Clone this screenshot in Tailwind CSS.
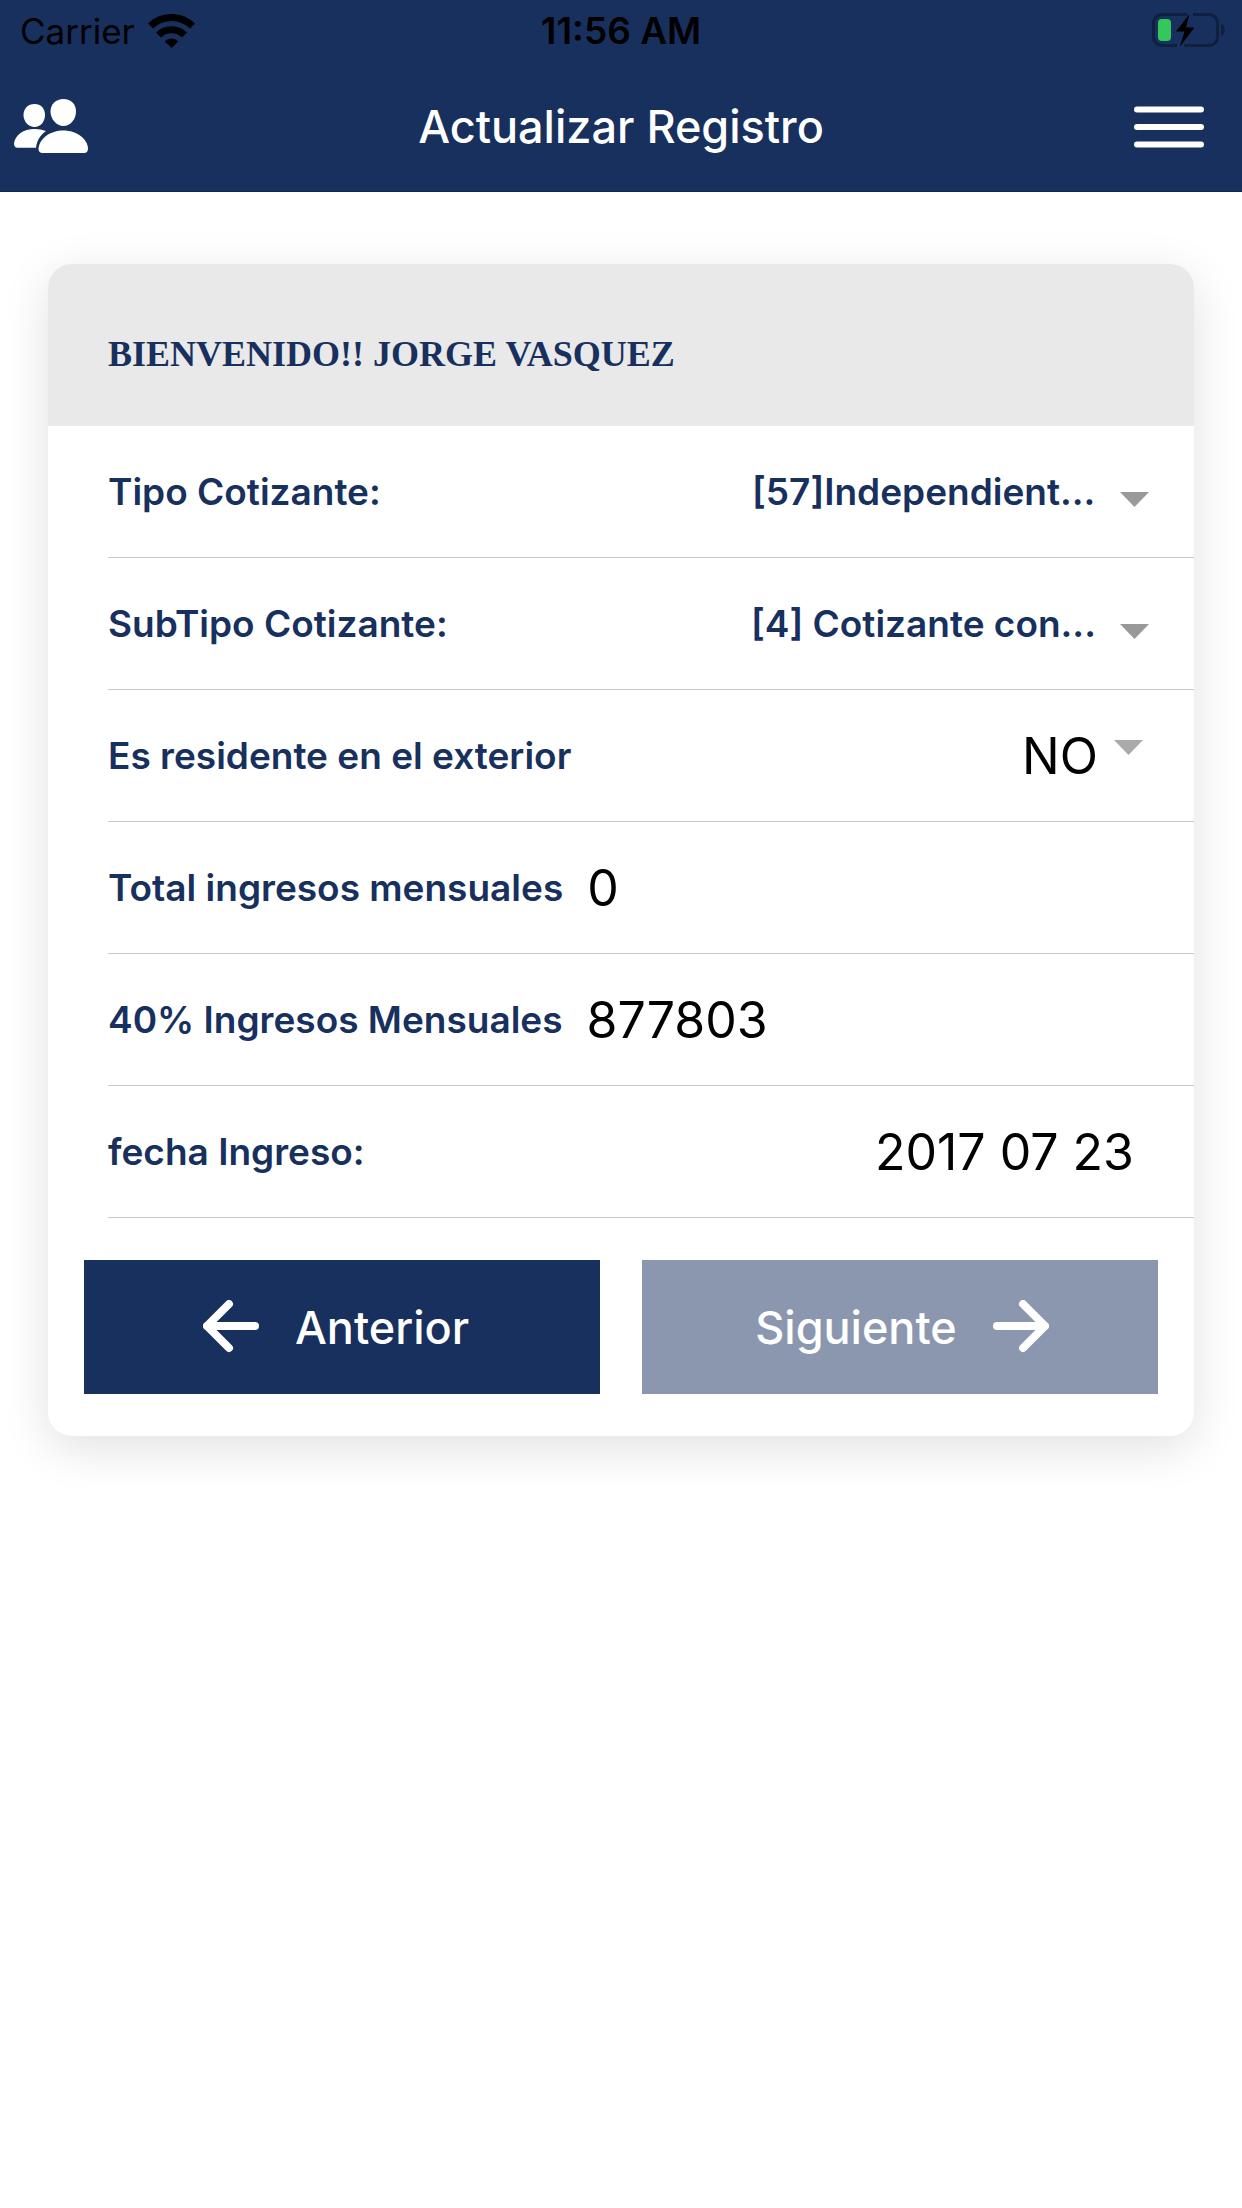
<!DOCTYPE html>
<html lang="es">
<head>
    <meta charset="UTF-8">
    <meta name="viewport" content="width=device-width, initial-scale=1.0">
    <title>Actualizar Registro</title>
    <script src="https://cdn.jsdelivr.net/npm/@tailwindcss/browser@4"></script>
</head>
<body class="bg-white font-['Inter','Liberation_Sans',sans-serif] text-black">

    <header class="bg-[#17305e] border-b border-[#132645]">
        <!-- Status bar -->
        <div class="grid grid-cols-[1fr_auto_1fr] items-center h-15 px-4 pt-px">
            <div class="flex items-center gap-[13px] pl-1">
                <span class="text-[35px] leading-10">Carrier</span>
                <svg class="w-[47px] h-[34px]" viewBox="0 0 47 34" fill="none" stroke="#000">
                    <path d="M2.500 12a30 30 0 0 1 42 0" stroke-width="7" />
                    <path d="M10.500 21a18.500 18.500 0 0 1 26 0" stroke-width="7" />
                    <path d="M23.500 34l-6.800-6.800a9.800 9.800 0 0 1 13.600 0z" fill="#000" stroke="none" />
                </svg>
            </div>
            <span class="text-[37px] leading-10 font-semibold">11:56 AM</span>
            <svg class="justify-self-end w-[74px] h-[35px]" viewBox="0 0 74 35" fill="none">
                <path d="M35 1.500H10A8.500 8.500 0 0 0 1.500 10v14a8.500 8.500 0 0 0 8.500 8.500h15M41 1.500h16a8.500 8.500 0 0 1 8.500 8.500v14a8.500 8.500 0 0 1-8.500 8.500H32" stroke="#0f1f3d" stroke-width="3" />
                <path d="M69 11c5 1 5 11 0 12z" fill="#0f1f3d" />
                <rect x="6" y="6" width="13" height="22" rx="4" fill="#34c759" />
                <path d="M37.500 1L24 18.500h8.500L28 33.500l14.500-19H34z" fill="#000" />
            </svg>
        </div>
        <!-- Toolbar -->
        <div class="grid grid-cols-[1fr_auto_1fr] items-center h-[131px] px-[14px] pt-0.5 text-white">
            <button type="button" aria-label="Usuarios" class="justify-self-start">
                <svg class="block w-[75px] h-[55px]" viewBox="0 0 75 55" fill="#fff">
                    <path d="M20.500 5C27 5 31 9.500 31 16s-4.500 12-10.500 12S9.500 22.500 9.500 16 14 5 20.500 5z" />
                    <path d="M49.500 0C57 0 62 5 62 12.500S56.500 27 49.500 27 36.500 20 36.500 12.500 42 0 49.500 0z" />
                    <path d="M20.500 30c4.500 0 8 .8 11.500 2-5.500 4-9 9-10 16.700H3.500C1 48.700 0 47 0 44.500 1 36 9.500 30 20.500 30z" />
                    <path d="M49.500 31.500C63 31.500 73.500 40 74 49.500c0 3-1.500 4.500-4 4.500H28.500c-2.500 0-4-1.500-4-4.500C25.500 39.500 36 31.500 49.500 31.500z" />
                </svg>
            </button>
            <h1 class="text-[45px] leading-13 font-medium">Actualizar Registro</h1>
            <button type="button" aria-label="Menú" class="justify-self-end pr-6">
                <svg class="block w-[70px] h-[42px]" viewBox="0 0 70 42" stroke="#fff" stroke-width="6" stroke-linecap="round">
                    <path d="M3 3.500h64M3 21h64M3 38.500h64" />
                </svg>
            </button>
        </div>
    </header>

    <main class="px-12 py-18">
        <form class="rounded-3xl overflow-hidden bg-white shadow-[0_12px_48px_rgba(0,0,0,0.12)]">
            <div class="bg-[#e9e9e9] px-15 pt-[66px] pb-12">
                <h2 class="font-['Liberation_Serif',serif] font-bold text-4xl leading-12 text-[#17305e]">BIENVENIDO!! JORGE VASQUEZ</h2>
            </div>

            <div class="ml-15">
                <div class="flex items-center justify-between h-33 pr-[45px] border-b border-[#c8c7cc]">
                    <label for="tipo" class="text-[37px] leading-12 font-semibold text-[#17305e]">Tipo Cotizante:</label>
                    <div class="flex items-center gap-6">
                        <select id="tipo" class="appearance-none text-[37px] leading-12 font-semibold text-[#17305e]">
                            <option>[57]Independient...</option>
                        </select>
                        <svg class="w-[29px] h-[15px] mt-4" viewBox="0 0 29 15" fill="#999"><path d="M0 0h29L14.500 15z" /></svg>
                    </div>
                </div>
                <div class="flex items-center justify-between h-33 pr-[45px] border-b border-[#c8c7cc]">
                    <label for="subtipo" class="text-[37px] leading-12 font-semibold text-[#17305e]">SubTipo Cotizante:</label>
                    <div class="flex items-center gap-6">
                        <select id="subtipo" class="appearance-none text-[37px] leading-12 font-semibold text-[#17305e]">
                            <option>[4] Cotizante con...</option>
                        </select>
                        <svg class="w-[29px] h-[15px] mt-4" viewBox="0 0 29 15" fill="#999"><path d="M0 0h29L14.500 15z" /></svg>
                    </div>
                </div>
                <div class="flex items-center justify-between h-33 pr-[51px] border-b border-[#c8c7cc]">
                    <label for="exterior" class="text-[37px] leading-12 font-semibold text-[#17305e]">Es residente en el exterior</label>
                    <div class="flex items-center gap-4">
                        <select id="exterior" class="appearance-none text-[50px] leading-15">
                            <option>NO</option>
                        </select>
                        <svg class="w-[29px] h-[15px] mb-4" viewBox="0 0 29 15" fill="#aaa"><path d="M0 0h29L14.500 15z" /></svg>
                    </div>
                </div>
                <div class="flex items-center gap-6 h-33 pr-15 border-b border-[#c8c7cc]">
                    <label for="total" class="text-[37px] leading-12 font-semibold text-[#17305e]">Total ingresos mensuales</label>
                    <input id="total" type="text" value="0" class="flex-1 min-w-0 text-[50px] leading-15">
                </div>
                <div class="flex items-center gap-6 h-33 pr-15 border-b border-[#c8c7cc]">
                    <label for="cuarenta" class="text-[37px] leading-12 font-semibold text-[#17305e]">40% Ingresos Mensuales</label>
                    <input id="cuarenta" type="text" value="877803" class="flex-1 min-w-0 text-[50px] leading-15">
                </div>
                <div class="flex items-center gap-6 h-33 pr-15 border-b border-[#c8c7cc]">
                    <label for="fecha" class="text-[37px] leading-12 font-semibold text-[#17305e]">fecha Ingreso:</label>
                    <input id="fecha" type="text" value="2017 07 23" class="flex-1 min-w-0 text-right text-[50px] leading-15">
                </div>
            </div>

            <div class="grid grid-cols-2 gap-[42px] px-9 py-[42px] text-white text-[45px] leading-14 font-medium">
                <button type="button" class="flex items-center justify-center gap-9 h-[134px] pt-0.5 pr-3 bg-[#17305e]">
                    <svg class="w-14 h-14" viewBox="0 0 56 56" fill="none" stroke="#fff" stroke-width="8" stroke-linecap="round" stroke-linejoin="round">
                        <path d="M26 4L4 26l22 22M4 26h48" />
                    </svg>
                    Anterior
                </button>
                <button type="button" disabled class="flex items-center justify-center gap-9 h-[134px] pt-0.5 pl-1 bg-[#8b97af]">
                    Siguiente
                    <svg class="w-14 h-14" viewBox="0 0 56 56" fill="none" stroke="#fff" stroke-width="8" stroke-linecap="round" stroke-linejoin="round">
                        <path d="M30 4l22 22-22 22M52 26H4" />
                    </svg>
                </button>
            </div>
        </form>
    </main>

</body>
</html>
